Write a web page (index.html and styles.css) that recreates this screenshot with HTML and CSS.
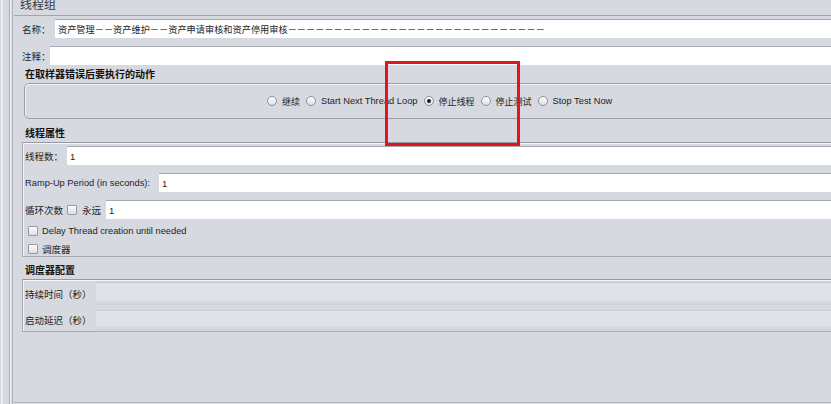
FILE: index.html
```html
<!DOCTYPE html>
<html lang="zh-CN">
    <head>
        <meta charset="UTF-8">
        <title>线程组</title>
        <link rel="stylesheet" href="styles.css">
    </head>
    <body>
        <div class="frame">
            <div class="gutter"></div>
            <div class="main">
                <div class="title"><span>线程组</span></div>

                <div class="row name-row">
                    <span class="lbl lbl-name">名称：</span>
                    <div class="field name-text">资产管理－－资产维护－－资产申请审核和资产停用审核－－－－－－－－－－－－－－－－－－－－－－－－－－－－</div>
                </div>
                <div class="row note-row">
                    <span class="lbl lbl-note">注释：</span>
                    <div class="field"></div>
                </div>

                <!-- sampler error action -->
                <div class="sec-title sec-a">在取样器错误后要执行的动作</div>
                <div class="action-box">
                    <span class="radio"></span><span class="opt">继续</span>
                    <span class="radio"></span><span class="opt en">Start Next Thread Loop</span>
                    <span class="radio on"></span><span class="opt">停止线程</span>
                    <span class="radio"></span><span class="opt">停止测试</span>
                    <span class="radio"></span><span class="opt en">Stop Test Now</span>
                </div>

                <!-- thread properties -->
                <div class="sec-title sec-b">线程属性</div>
                <div class="group props">
                    <div class="row prop-row r-threads">
                        <span class="lbl lbl-threads">线程数：</span>
                        <div class="field">1</div>
                    </div>
                    <div class="row prop-row r-ramp">
                        <span class="lbl lbl-ramp en">Ramp-Up Period (in seconds):</span>
                        <div class="field">1</div>
                    </div>
                    <div class="row prop-row r-loop">
                        <span class="lbl">循环次数</span>
                        <span class="check loop-check"></span>
                        <span class="lbl lbl-forever">永远</span>
                        <div class="field">1</div>
                    </div>
                    <div class="row check-row r-delay">
                        <span class="check"></span>
                        <span class="en">Delay Thread creation until needed</span>
                    </div>
                    <div class="row check-row r-sched">
                        <span class="check"></span>
                        <span>调度器</span>
                    </div>
                </div>

                <!-- scheduler -->
                <div class="sec-title sec-c">调度器配置</div>
                <div class="group sched">
                    <div class="row sched-row r-dur">
                        <span class="lbl lbl-sched">持续时间（秒）</span>
                        <div class="field off"></div>
                    </div>
                    <div class="row sched-row r-delay2">
                        <span class="lbl lbl-sched">启动延迟（秒）</span>
                        <div class="field off"></div>
                    </div>
                </div>
            </div>
            <div class="mark"></div>
        </div>
    </body>
</html>
```

FILE: styles.css
```css
body {
    margin: 0;
    width: 831px;
    height: 404px;
    overflow: hidden;
    background-color: #d6d9e0;
    font-family: "Liberation Sans", "Noto Sans CJK SC", sans-serif;
    font-size: 9.5px;
    color: #1e1e1e;
}

.frame {
    display: flex;
    height: 404px;
    position: relative;
}

/* splitter on the left */
.gutter {
    width: 14px;
    flex: none;
    background: linear-gradient(to right,
        #d6d9e0 0 1px, #eceef1 1px 3px, #d6d9e0 3px 9px,
        #a8acb2 9px 10px, #f3f4f6 10px 11px, #d6d9e0 11px 12px,
        #b2b6bc 12px 13px, #d6d9e0 13px);
}

.main {
    flex: 1;
    min-width: 0;
    height: 403px;
    box-sizing: border-box;
    display: flex;
    flex-direction: column;
    border-bottom: 1px solid #b4b8be;
}

.title {
    height: 15px;
    padding-left: 6px;
    overflow: hidden;
    border-bottom: 1px solid #a2a6ac;
}

.title span {
    display: block;
    margin-top: -2px;
    font-size: 12px;
    line-height: 14px;
    color: #3a3a3a;
}

.en {
    font-size: 9.3px;
}

.row {
    display: flex;
    align-items: center;
}

.lbl {
    flex: none;
    white-space: nowrap;
}

.field {
    flex: 1;
    align-self: stretch;
    min-width: 0;
    box-sizing: border-box;
    display: flex;
    align-items: center;
    padding-left: 3px;
    background-color: #fff;
    border-top: 1px solid #a6aab0;
    white-space: nowrap;
    overflow: hidden;
}

.field.off {
    background: linear-gradient(#e0e3e7, #dee1e6 75%, #cdd0d7);
    border-top: 1px solid #c6c9cf;
}

/* name / comment */

.name-row {
    height: 19px;
    margin-top: 3px;
    padding-left: 8px;
}

.lbl-name {
    width: 33px;
}

.name-text {
    font-size: 9.2px;
}

.note-row {
    height: 19px;
    margin-top: 8px;
    padding-left: 8px;
}

.lbl-note {
    width: 28px;
}

/* section titles */

.sec-title {
    height: 16px;
    line-height: 16px;
    padding-left: 11px;
    font-size: 10px;
    font-weight: bold;
    color: #111;
}

.sec-a {
    margin-top: 2px;
}

.sec-b {
    margin-top: 7px;
}

.sec-c {
    margin-top: 6px;
}

/* radio box */

.action-box {
    height: 36px;
    margin-left: 10px;
    margin-right: -10px;
    box-sizing: border-box;
    display: flex;
    align-items: center;
    padding-left: 242px;
    border: 1px solid #9ca0a6;
    border-radius: 5px;
    box-shadow: inset 1px 1px 0 #f3f4f6;
}

.radio {
    width: 10px;
    height: 10px;
    flex: none;
    box-sizing: border-box;
    margin-right: 5px;
    border: 1px solid #8f9399;
    border-radius: 50%;
    background: linear-gradient(#ffffff, #dcdfe4);
    position: relative;
}

.radio.on::after {
    content: "";
    position: absolute;
    left: 2px;
    top: 2px;
    width: 4px;
    height: 4px;
    border-radius: 50%;
    background-color: #1c1c1c;
}

.opt {
    margin-right: 6px;
    font-size: 9px;
    white-space: nowrap;
}

.opt.en {
    font-size: 9.3px;
}

/* groups */

.group {
    margin-left: 8px;
    border-top: 1px solid #979ba1;
    border-left: 1px solid #a4a8ae;
    border-bottom: 1px solid #a9adb3;
    box-shadow: inset 1px 1px 0 #f4f5f7;
    padding-left: 2px;
}

.props {
    padding-bottom: 1px;
}

.prop-row {
    height: 19px;
    margin-top: 8px;
}

.r-threads {
    margin-top: 3px;
}

.lbl-threads {
    width: 42px;
}

.lbl-ramp {
    width: 134px;
}

.check {
    width: 10px;
    height: 10px;
    flex: none;
    box-sizing: border-box;
    border: 1px solid #979ba1;
    border-radius: 1px;
    background: linear-gradient(#fdfdfe, #dcdfe4);
}

.loop-check {
    margin-left: 4px;
    margin-right: 5px;
}

.lbl-forever {
    width: 24px;
}

.check-row {
    height: 12px;
    margin-top: 6px;
    padding-left: 3px;
}

.check-row .check {
    margin-right: 4px;
}

.sched {
    padding-bottom: 1px;
}

.sched-row {
    height: 23px;
}

.r-dur {
    margin-top: 2px;
}

.r-delay2 {
    height: 20px;
    margin-top: 5px;
}

.lbl-sched {
    width: 71px;
}

/* annotation drawn over the screenshot */
.mark {
    position: absolute;
    left: 385px;
    top: 61px;
    width: 135px;
    height: 85px;
    box-sizing: border-box;
    border: 3px solid #e2151b;
}
```
